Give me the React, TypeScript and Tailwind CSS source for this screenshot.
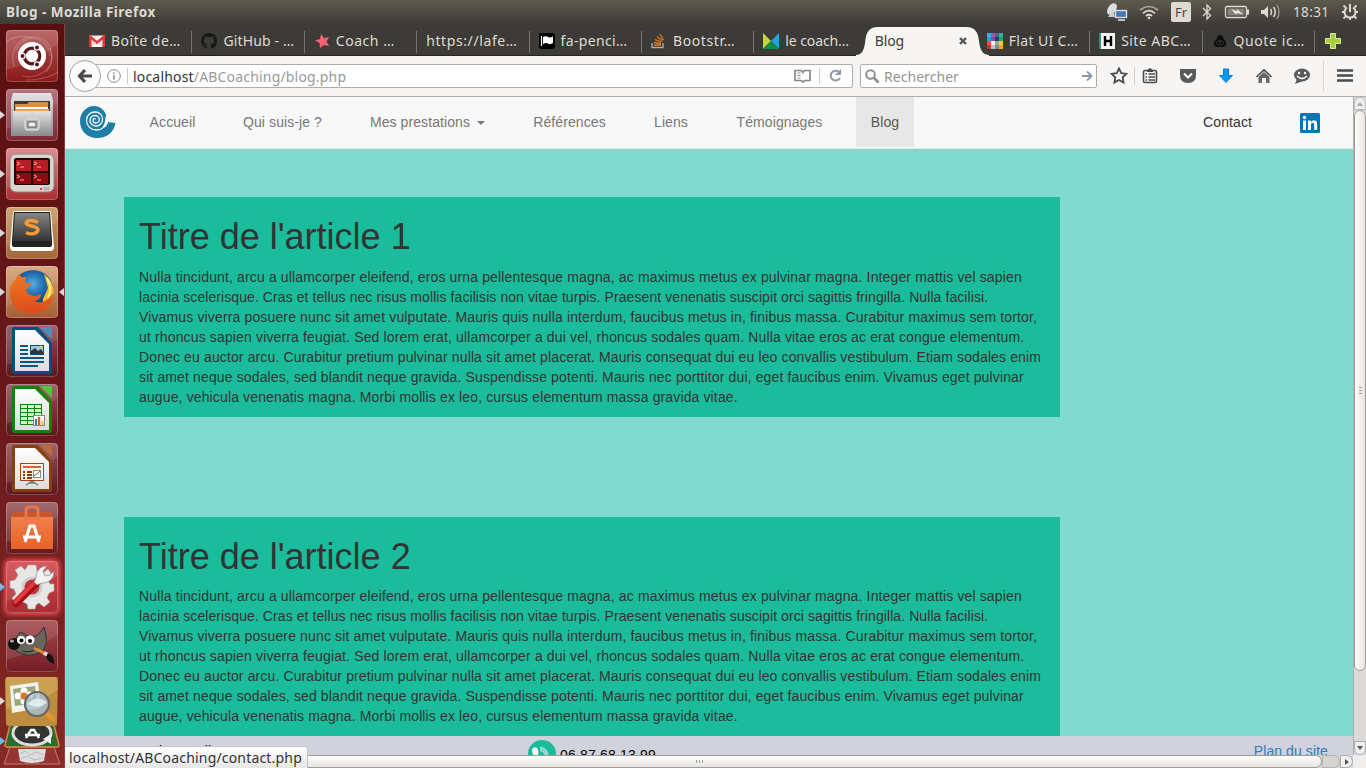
import React from "react";

const ubuntu = "font-['Noto_Sans','Open_Sans',sans-serif]";
const helv = "font-['Liberation_Sans',Arial,sans-serif]";

/* ---------- Launcher ---------- */

function Tile({ tone, left, right, children }: { tone: string; left?: string; right?: boolean; children: React.ReactNode }) {
  return (
    <div className="relative flex h-[52px] w-full shrink-0 justify-center pr-px">
      <svg viewBox="0 0 52 52" className={`h-[52px] w-[52px] rounded-[4px] ${tone}`}>
        <path d="M0 0H52V14Q26 34 0 40Z" fill="#fff" opacity=".1" />
        {children}
        <rect x=".5" y=".5" width="51" height="51" rx="4" fill="none" stroke="#fff" strokeOpacity=".22" />
      </svg>
      {left && (
        <svg viewBox="0 0 5 8" className="absolute top-[22px] left-0 h-2 w-[5px]"><path d="M0 0L5 4L0 8Z" fill={left} /></svg>
      )}
      {right && (
        <svg viewBox="0 0 5 8" className="absolute top-[22px] right-0 h-2 w-[5px]"><path d="M5 0L0 4L5 8Z" fill="#d8d8d8" /></svg>
      )}
    </div>
  );
}

function OfficePage({ color, fold }: { color: string; fold: string }) {
  return (
    <>
      <path d="M8 2H32L46 18V47Q46 49 44 49H8Q6 49 6 47V4Q6 2 8 2Z" fill={color} />
      <path d="M9 5H29L43 19V46H9Z" fill="url(#paper)" />
      <path d="M34 2H46V14Z" fill={fold} />
    </>
  );
}

function Launcher() {
  return (
    <aside className="relative flex h-full w-[65px] shrink-0 flex-col gap-[7px] overflow-hidden border-r border-[#8b4040] bg-linear-to-b from-[#58100f] via-[#6a171b] to-[#852a25] pt-[6px]">
      <svg className="absolute h-0 w-0">
        <defs>
          <linearGradient id="paper" x2="0" y2="1"><stop stopColor="#fff" /><stop offset="1" stopColor="#dcdcdc" /></linearGradient>
          <linearGradient id="metal" x2="0" y2="1"><stop stopColor="#e4e4e4" /><stop offset="1" stopColor="#8c8c8c" /></linearGradient>
          <linearGradient id="dark" x2="0" y2="1"><stop stopColor="#858585" /><stop offset="1" stopColor="#333" /></linearGradient>
          <linearGradient id="orange" x2="0" y2="1"><stop stopColor="#ee8150" /><stop offset="1" stopColor="#e96224" /></linearGradient>
          <radialGradient id="globe" cx=".5" cy=".35"><stop stopColor="#5ab0e0" /><stop offset=".5" stopColor="#2472b4" /><stop offset="1" stopColor="#173f7f" /></radialGradient>
          <linearGradient id="fox" x2="0" y2="1"><stop stopColor="#ee7a22" /><stop offset="1" stopColor="#dd4a1b" /></linearGradient>
        </defs>
      </svg>
      <Tile tone="bg-linear-to-b from-[#b05656] to-[#8b1518]">
        <g fill="none" stroke="#fff" strokeOpacity=".2" strokeWidth="1.2">
          <path d="M8 36C2 14 20 4 34 8C46 12 50 30 40 42" /><path d="M44 18C52 38 32 50 16 46" /><path d="M10 20C20 2 42 6 44 26" /><path d="M0 12Q10 4 26 8M52 42Q40 50 20 50" />
        </g>
        <circle cx="26" cy="26" r="14" fill="#fff" />
        <circle cx="26" cy="26" r="7.8" fill="none" stroke="#591519" strokeWidth="3.2" />
        <g stroke="#fff" strokeWidth="1.2" fill="#591519"><circle cx="16.500" cy="26" r="2.600" /><circle cx="31" cy="17.500" r="2.600" /><circle cx="31" cy="34.500" r="2.600" /></g>
      </Tile>
      <Tile tone="bg-linear-to-b from-[#ad6470] to-[#7d2936]" left="#d8d8d8">
        <path d="M7 4H45L47 11V47H5V11Z" fill="url(#metal)" /><rect x="8" y="12" width="36" height="12" fill="#3a3a3a" />
        <path d="M9 15H21L23 13H42V24H9Z" fill="#e58a36" /><path d="M10 18H42V21H10Z" fill="#fff" /><path d="M9 20H43V24H9Z" fill="#f3a24b" />
        <path d="M7 22H45V46H7Z" fill="url(#metal)" /><rect x="19" y="30" width="14" height="11" rx="2" fill="#b8b8b8" stroke="#e9e9e9" /><rect x="22" y="33" width="8" height="5" fill="#eee" stroke="#555" />
      </Tile>
      <Tile tone="bg-linear-to-b from-[#d98084] to-[#ac2c30]" left="#d8d8d8">
        <rect x="4" y="6" width="44" height="38" rx="6" fill="#d6d5cf" stroke="#888" /><rect x="8" y="10" width="36" height="27" rx="2" fill="#280204" />
        <path d="M10 12H25V23H10ZM27 12H42V23H27Z" fill="#b81d24" /><path d="M10 25H25V36H10ZM27 25H42V36H27Z" fill="#8d0b0e" />
        <path d="M11 14l3 1.5-3 1.5M14 19h4M28 14l3 1.5-3 1.5M31 19h4M11 27l3 1.5-3 1.5M14 32h4M28 27l3 1.5-3 1.5M31 32h4" stroke="#f5a5a5" fill="none" /><circle cx="35" cy="41" r="1" fill="red" /><rect x="38" y="39.5" width="5" height="2.5" fill="#bbb" stroke="#999" strokeWidth=".5" />
      </Tile>
      <Tile tone="bg-linear-to-b from-[#c99a67] to-[#a26639]" left="#d8d8d8">
        <path d="M7 6Q7 4 9 4H43Q45 4 45 6L48 40Q48 44 44 44H8Q4 44 4 40Z" fill="#fff" /><path d="M8 5H44L46 34V38Q46 40 44 40H8Q6 40 6 38V34Z" fill="#222" /><path d="M9 6H43L45 34H7Z" fill="url(#dark)" />
        <path d="M32 15.500C27 12.500 21 13 20 16C20 20 32 18 32 23C31 27 25 28 20 25.500" fill="none" stroke="#f79b37" strokeWidth="3.400" />
      </Tile>
      <Tile tone="bg-linear-to-b from-[#d5a277] to-[#a45e35]" left="#d8d8d8" right>
        <circle cx="27" cy="24" r="20" fill="url(#globe)" />
        <path d="M38 8C48 16 51 27 43 38L36 43L37 33L42 22Z" fill="#f3bd2c" /><path d="M41 12Q47 22 42 32" stroke="#ffee90" fill="none" strokeWidth="1.800" />
        <path d="M12 8C15 10 15 12 21 11Q18 14 20 17H26Q25 21 20 23C21 29 28 32 35 28C35 33 31 35 28 35C35 38 41 36 47 27C47 40 38 47.500 26 47.500C12 47 4 39 4 27C4 19 7 15 10 13Z" fill="url(#fox)" />
      </Tile>
      <Tile tone="bg-linear-to-b from-[#935159] to-[#5c171e]">
        <OfficePage color="#064f7f" fold="#4791bd" />
        <path d="M14 21H22M14 25H22M14 29H22M14 33H38M14 37H38M14 41H32" stroke="#0b5687" strokeWidth="2" /><rect x="24.5" y="20.5" width="13" height="9" fill="#99c9e5" stroke="#064f7f" /><path d="M25 29V26L29 23L32 26L35 24L37 27V29Z" fill="#333" /><circle cx="35" cy="22" r="1.5" fill="#f8c84b" />
      </Tile>
      <Tile tone="bg-linear-to-b from-[#935159] to-[#5c171e]">
        <OfficePage color="#16820c" fold="#55c439" />
        <rect x="14" y="20" width="22" height="21" fill="#138207" /><path d="M15 22.500H35M15 26.500H35M15 30.500H35M15 34.500H35M15 38.500H35" stroke="#d7f7c8" strokeWidth="2.800" strokeDasharray="6 1" />
        <rect x="27.5" y="31.5" width="11" height="10" fill="#fff" stroke="#888" /><path d="M30 41V35" stroke="#2585c7" strokeWidth="2" /><path d="M33 41V33" stroke="#e75b20" strokeWidth="2.5" /><path d="M36.5 41V37" stroke="#f5ba25" strokeWidth="2" />
      </Tile>
      <Tile tone="bg-linear-to-b from-[#935159] to-[#5c171e]">
        <OfficePage color="#87400f" fold="#b86b38" />
        <rect x="14.5" y="20.5" width="23" height="17" fill="#fff4ea" stroke="#a54512" /><path d="M17 24H35" stroke="#d5642a" strokeWidth="2" /><path d="M17 29H19M17 32H19M17 35H19M21 29H26M21 32H26M21 35H26" stroke="#913b0c" strokeWidth="2" /><rect x="27.5" y="27.5" width="7" height="7" fill="#fff" stroke="#888" /><path d="M28 33l3-2 3-3" stroke="#3a9b32" fill="none" /><path d="M26 38L20 42M26 38L32 42M24 40H28" stroke="#777" strokeWidth="1.5" />
      </Tile>
      <Tile tone="bg-linear-to-b from-[#97585d] to-[#64181e]">
        <path d="M5 14H47V47H5Z" fill="url(#orange)" /><path d="M7 10H45L47 15H5Z" fill="#c9562a" /><path d="M20 18V8Q20 5 23 5H29Q32 5 32 8V18" fill="none" stroke="#e87645" strokeWidth="3" />
        <path d="M19 40L24 24H28L33 40M17 35H35" fill="none" stroke="#fff" strokeWidth="3.200" />
      </Tile>
      <Tile tone="bg-linear-to-b from-[#d4484c] to-[#a82d32] shadow-[0_0_4px_2px_#ed4b50]" left="#6cbdf0">
        <path d="M22 4H30L31 10L37 12L42 8L46 14L42 19L44 23H48V30L43 32L41 37L44 41L38 46L33 42L30 44L29 48H22L21 43L15 40L10 43L6 37L10 33L8 28L4 27V20L9 19L12 14L9 9L15 5L19 9Z" fill="#e7e7e5" stroke="#aaa" strokeWidth=".6" /><circle cx="26" cy="26" r="9" fill="#bd3940" stroke="#cfcfcf" strokeWidth="3" />
        <path d="M31 21L10 42" stroke="#a80f17" strokeWidth="8" strokeLinecap="round" /><path d="M30 20L9 41" stroke="#e33a40" strokeWidth="4" strokeLinecap="round" />
        <path d="M30 17C30 10 34 5 41 5L37 10L39 15L44 14L48 10C48 18 43 22 36 22L31 24L28 21Z" fill="#f3f3f3" stroke="#888" strokeWidth=".7" />
      </Tile>
      <Tile tone="bg-linear-to-b from-[#a34b50] to-[#751c24]">
        <path d="M14 12L22 16Q31 20 38 7Q44 26 35 32Q23 39 10 31L8 22Z" fill="#67655d" stroke="#33322f" /><ellipse cx="8" cy="24" rx="6" ry="6" fill="#121212" /><ellipse cx="6" cy="21" rx="2" ry="1.5" fill="#aaa" /><circle cx="15" cy="20" r="4" fill="#fff" /><circle cx="24" cy="20" r="4.5" fill="#fff" /><circle cx="15.5" cy="20.5" r="2" /><circle cx="24" cy="21" r="2" />
        <path d="M16 31Q26 34 31 27" stroke="#222" fill="none" /><path d="M28 28L42 35" stroke="#e48a34" strokeWidth="3" /><path d="M38 33L42 35" stroke="#ddd" strokeWidth="4" /><path d="M42 33Q49 36 48 44Q42 42 40 37Z" fill="#111" />
      </Tile>
      <div className="-mt-0.5 flex h-[91px] shrink-0">
        <svg viewBox="0 0 64 91" className="h-[91px] w-16">
          <path d="M10 70H54L60 87H4Z" fill="#963433" stroke="#cf7974" /><path d="M18 72H46L44 84Q32 88 20 84Z" fill="#ddd" /><path d="M20 77L25 74L30 78L36 75L44 78M21 82L27 79L34 83L43 81" stroke="#bbb" fill="none" />
          <path d="M10 48H54L59 68Q59 70 57 70H7Q5 70 5 68Z" fill="#286c2f" stroke="#e08748" strokeWidth="1.5" /><ellipse cx="32" cy="56" rx="19" ry="12" fill="#333" stroke="#ddd" strokeWidth="3" /><path d="M26 61L31 53H34L39 61M25 58H40" stroke="#fff" strokeWidth="2.4" fill="none" /><path d="M43 62L51 57V67Z" fill="#eee" />
          <path d="M8 0H56Q58 0 58 3L57 46Q57 49 54 49H9Q6 49 6 46L5 4Q5 0 8 0Z" fill="#bb8d3c" /><path d="M8 0H56L58 12Q35 30 6 32V0Z" fill="#dfbd78" opacity=".4" />
          <path d="M10 9L38 5L41 31L12 36Z" fill="#f2f2ef" /><path d="M13 12L35 9L37 26L15 29Z" fill="#96a976" /><g fill="#fff"><circle cx="24" cy="14" r="3.500" /><circle cx="18" cy="19" r="3.500" /><circle cx="30" cy="18" r="3.500" /><circle cx="24" cy="24" r="3.500" /></g><circle cx="24" cy="19" r="3.500" fill="#e17427" />
          <path d="M46 36L53 42" stroke="#e49331" strokeWidth="5" strokeLinecap="round" /><circle cx="37" cy="27" r="12" fill="#aac2d0" fillOpacity=".8" stroke="#666" strokeWidth="2.200" /><path d="M27 27Q36 17 47 25Q42 31 33 29Z" fill="#e9f4fa" opacity=".8" />
          <path d="M0 20L5 24L0 28Z" fill="#d8d8d8" /><path d="M0 60L5 64L0 68Z" fill="#6cbdf0" />
        </svg>
      </div>
    </aside>
  );
}

/* ---------- System bar ---------- */

function SystemBar() {
  return (
    <header className={`flex h-6 shrink-0 items-center justify-between bg-linear-to-b from-[#5d5a4f] to-[#3d3c37] pl-1.5 text-[#dfdbd2] ${ubuntu}`}>
      <span className="text-[13.5px] font-bold tracking-[0.48px]">Blog - Mozilla Firefox</span>
      <svg viewBox="0 0 260 24" className="h-6 w-[260px]">
        <ellipse cx="6" cy="9" rx="4" ry="6.500" transform="rotate(35 6 9)" fill="#ddd" /><path d="M2 17L7 9L9 17Z" fill="#ccc" /><rect x="9.500" y="10.500" width="11" height="7" fill="#3f77b8" stroke="#ddd" strokeWidth="1.400" /><path d="M12 20H19" stroke="#ddd" strokeWidth="1.600" />
        <g fill="none" stroke="#dfdbd2" strokeWidth="1.700"><path d="M34 10Q43 3 52 10" opacity=".65" /><path d="M37 13.300Q43 8 49 13.300" /><path d="M40 16Q43 13.500 46 16" /></g><circle cx="43" cy="18" r="1.300" fill="#dfdbd2" />
        <rect x="65" y="2" width="20" height="20" rx="2" fill="#dfdbd2" /><text x="69" y="17" fontSize="13" fill="#4a4843">Fr</text>
        <path d="M97 8L104.500 15.500L101 19V5L104.500 8.500L97 16" fill="none" stroke="#dfdbd2" strokeWidth="1.300" />
        <rect x="119.500" y="6.500" width="21" height="11" rx="1.500" fill="none" stroke="#dfdbd2" strokeWidth="1.300" /><rect x="121.500" y="8.500" width="17" height="7" fill="#85827a" /><path d="M142 9.500V14.500" stroke="#dfdbd2" strokeWidth="2" /><path d="M125 9L131 11.500V9L137 14.500L130.500 12.800V15Z" fill="#eee" />
        <path d="M155 10H158L162 6V18L158 14H155Z" fill="#dfdbd2" /><g fill="none" stroke="#dfdbd2" strokeWidth="1.500"><path d="M164.500 9Q166.500 12 164.500 15" /><path d="M167.500 7Q171 12 167.500 17" /><path d="M171 5Q175 12 171 19" opacity=".5" /></g>
        <text x="187" y="17" fontSize="13.500" textLength="36" fill="#dfdbd2">18:31</text>
        <g fill="none" stroke="#dfdbd2"><path d="M241 7.500A5.500 5.500 0 1 0 247 7.500" strokeWidth="2" /><path d="M244 4V12" strokeWidth="2" /><path d="M239.500 7.500L237.500 5.500M248.500 7.500L250.500 5.500M236 12H239M249 12H252M239.500 16.500L237.500 18.500M248.500 16.500L250.500 18.500M244 17V20" strokeWidth="1.800" /></g>
      </svg>
    </header>
  );
}

/* ---------- Tabs ---------- */

const box = "h-4 w-4 shrink-0";
const icons = {
  gmail: <svg viewBox="0 0 16 16" className={box}><rect y="2.500" width="16" height="11.500" rx="1" fill="#f4f4f4" /><path d="M1.300 14V4L8 9.500L14.700 4V14" fill="none" stroke="#dd3a35" strokeWidth="2.600" /><path d="M3 13L7 9M13 13L9 9" stroke="#e8a09d" strokeWidth=".7" /></svg>,
  github: <svg viewBox="0 0 16 16" className={box}><path fill="#171717" d="M8 0C3.580 0 0 3.580 0 8c0 3.540 2.290 6.530 5.470 7.590.4.070.55-.17.55-.38 0-.19-.01-.82-.01-1.490-2.010.37-2.530-.49-2.690-.94-.09-.23-.48-.94-.82-1.130-.28-.15-.68-.52-.01-.53.63-.01 1.080.58 1.230.82.72 1.210 1.870.87 2.330.66.07-.52.28-.87.51-1.070-1.780-.2-3.640-.89-3.640-3.950 0-.87.31-1.590.82-2.150-.08-.2-.36-1.020.08-2.120 0 0 .67-.21 2.200.82a7.400 7.400 0 0 1 4 0c1.530-1.040 2.200-.82 2.200-.82.44 1.100.16 1.920.08 2.120.51.56.82 1.270.82 2.150 0 3.070-1.870 3.750-3.650 3.950.29.25.54.73.54 1.480 0 1.070-.01 1.930-.01 2.200 0 .21.15.46.55.38A8 8 0 0 0 16 8c0-4.420-3.580-8-8-8z" /></svg>,
  star: <svg viewBox="0 0 16 16" className={box}><path fill="#ee6472" d="M7 1L10 5L15 4L12.500 8.500L15 13L10 12L6 15L5.500 10L1 7.500L6 6Z" /></svg>,
  flag: <svg viewBox="0 0 16 16" className={box}><rect width="16" height="16" rx="2" fill="#000" /><path d="M2.500 3V13" stroke="#fff" strokeWidth="1.200" /><path d="M4 4Q7 2.500 9 4Q11 5 14 3.500V10Q11 12 9 10.500Q7 9.500 4 11Z" fill="#fff" /></svg>,
  stack: <svg viewBox="0 0 16 16" className={box}><path d="M1 10V14.500H12V10" fill="none" stroke="#a8b0b5" strokeWidth="1.300" /><path d="M3 12H10M3 9.500L10 10.500M4 6.700L10.500 9M6 3.500L11.300 7.800M9 1L12.500 7" stroke="#e8781e" strokeWidth="1.300" /></svg>,
  coach: <svg viewBox="0 0 16 16" className={box}><path d="M0 0L8 8L0 16Z" fill="#c5d245" /><path d="M16 0L8 8L16 16Z" fill="#20a0df" /><path d="M8 8L16 16H0Z" fill="#128d43" /></svg>,
  flat: <svg viewBox="0 0 16 16" className={box}>{["#3fa9e0","#9b59b6","#5c6470","#1abc9c","#3498db","#8e44ad","#2c3e50","#16a085","#f04f3e","#ecf0f1","#95a5a6","#f9cf2f","#c0392b","#bdc3c7","#7f8c8d","#f9a514"].map((c, i) => <rect key={i} x={(i % 4) * 4} y={Math.floor(i / 4) * 4} width="4" height="4" fill={c} />)}</svg>,
  hero: <svg viewBox="0 0 16 16" className={box}><rect width="16" height="16" fill="#f4f4f4" /><rect width="2" height="16" fill="#3d8b70" /><path d="M6 3V13M12 3V13M6 8H12" stroke="#000" strokeWidth="2.400" /></svg>,
  quote: <svg viewBox="0 0 16 16" className={box}><path d="M8 2Q11 2 11 5Q15 9 14 12Q12 15 8 13.500Q3 15 2 12Q1 9 5 6Q5 2 8 2Z" fill="#0c0c0c" /><path d="M4 9.500Q8 5.500 12 9.500Q11 12 8 12Q5 12 4 9.500Z" fill="none" stroke="#3a3936" /><circle cx="8" cy="9.300" r="1" fill="#3a3936" /></svg>,
};

function Tab({ icon, text, bar = true, track }: { icon?: React.ReactNode; text: string; bar?: boolean; track: string }) {
  return (
    <div className="relative flex h-8 w-[112.4px] shrink-0 items-center gap-1.5 pt-px pl-[9px]">
      {icon}
      <span className={`whitespace-nowrap ${track}`}>{text}</span>
      {bar && <i className="absolute top-[7px] right-0 h-[22px] w-px bg-[#777570]" />}
    </div>
  );
}

function Tabs() {
  return (
    <div className={`relative flex h-8 shrink-0 border-b border-[#252421] bg-[#3c3b37] pl-[15px] text-[14px] text-[#dfdbd2] ${ubuntu}`}>
      <Tab icon={icons.gmail} text="Boîte de…" track="tracking-[0.5px]" />
      <Tab icon={icons.github} text="GitHub - …" track="tracking-[0.15px]" />
      <Tab icon={icons.star} text="Coach …" track="tracking-[0.55px]" />
      <Tab text="https://lafe…" track="tracking-[0.6px]" />
      <Tab icon={icons.flag} text="fa-penci…" track="tracking-[0.35px]" />
      <Tab icon={icons.stack} text="Bootstr…" track="tracking-[0.6px]" />
      <Tab icon={icons.coach} text="le coach…" track="tracking-[-0.1px]" bar={false} />
      <div className="relative z-10 flex h-8 w-[111px] shrink-0 items-center justify-between pt-px pr-[11px] pl-[8px] text-[#3c3b37]">
        <svg viewBox="0 0 136 29" className="absolute top-[3px] -left-[14px] -z-10 h-[29px] w-[136px]"><path d="M3 29V28C9 28 11 23 12 16C13 5 16 0 25 0H113C122 0 125 5 126 14C127 23 130 28 136 28V29Z" fill="#f6f5f4" /></svg>
        <span className="tracking-[-0.1px]">Blog</span>
        <svg viewBox="0 0 8 8" className="h-2 w-2"><path d="M1 1L7 7M7 1L1 7" stroke="#555" strokeWidth="2.400" /></svg>
      </div>
      <Tab icon={icons.flat} text="Flat UI C…" track="tracking-[0.35px]" />
      <Tab icon={icons.hero} text="Site ABC…" track="tracking-[0.45px]" />
      <Tab icon={icons.quote} text="Quote ic…" track="tracking-[0.6px]" />
      <div className="flex flex-1 items-center pt-[3px] pl-[9px]">
        <svg viewBox="0 0 18 18" className="h-[18px] w-[18px]"><path d="M6.500 1.500H11.500V6.500H16.500V11.500H11.500V16.500H6.500V11.500H1.500V6.500H6.500Z" fill="#a6cf3d" stroke="#d6ef8b" /></svg>
      </div>
    </div>
  );
}

/* ---------- Navigation toolbar ---------- */

function Toolbar() {
  return (
    <div className={`flex h-[41px] shrink-0 items-center border-b border-[#b0ada8] bg-[#f6f5f4] pl-1 text-[14px] ${ubuntu}`}>
      <div className="z-10 flex h-8 w-8 shrink-0 items-center justify-center rounded-full border border-[#a5a29d] bg-[#fafafa]">
        <svg viewBox="0 0 16 16" className="h-4 w-4"><path d="M8 2L2.500 8L8 14M3 8H15" fill="none" stroke="#4a4a4a" strokeWidth="3.200" /></svg>
      </div>
      <div className="-ml-[5px] flex h-6 w-[757px] shrink-0 items-center rounded-r-[2px] border border-[#b0ada8] bg-white pl-2.5">
        <svg viewBox="0 0 14 14" className="h-[14px] w-[14px]"><circle cx="7" cy="7" r="6.300" fill="none" stroke="#8a8a8a" /><path d="M7 6V10.500M7 3.500V5" stroke="#8a8a8a" strokeWidth="1.500" /></svg>
        <i className="mr-[5px] ml-1.5 h-4 w-px bg-[#ccc]" />
        <span className="tracking-[0.18px] text-[#9a9a9a]"><span className="text-[#333]">localhost</span>/ABCoaching/blog.php</span>
        <svg viewBox="0 0 58 22" className="ml-auto h-[22px] w-[58px]">
          <path d="M1 5.500H7L9 7L11 5.500H16V15.500H11L9 17L7 15.500H1Z" fill="none" stroke="#888" strokeWidth="1.700" /><path d="M3.500 8H6.500M3.500 10.500H6.500M3.500 13H6.500M9 7V9" stroke="#888" /><path d="M25.500 3V19" stroke="#ccc" />
          <path d="M45 7A5 4.800 0 1 0 46 13" fill="none" stroke="#8b9aa8" strokeWidth="2" /><path d="M47 4V10H41Z" fill="#8b9aa8" />
        </svg>
      </div>
      <div className="ml-[7px] flex h-6 w-[237px] shrink-0 items-center rounded-[2px] border border-[#b0ada8] bg-white pr-[3px] pl-1">
        <svg viewBox="0 0 15 15" className="h-[15px] w-[15px]"><circle cx="5.500" cy="5.500" r="4.300" fill="none" stroke="#919191" strokeWidth="2" /><path d="M9 9L13.500 13.500" stroke="#919191" strokeWidth="2.600" /></svg>
        <span className="ml-1 tracking-[0.05px] text-[#949494]">Rechercher</span>
        <svg viewBox="0 0 12 12" className="ml-auto h-3 w-3"><path d="M1 6H10M6 1.500L10.500 6L6 10.500" fill="none" stroke="#8b9aa8" strokeWidth="1.800" /></svg>
      </div>
      <svg viewBox="0 0 269 40" className="h-10 w-[269px]" fill="none" stroke="#4b4b4b">
        <path d="M22 12.500L24.300 17.200L29.300 17.800L25.700 21.300L26.600 26.500L22 24L17.400 26.500L18.300 21.300L14.700 17.800L19.700 17.200Z" strokeWidth="1.800" />
        <path d="M37.500 11V29" stroke="#d3d1ce" />
        <path d="M50 14.500H48Q46.500 14.500 46.500 16V25Q46.500 26.500 48 26.500H58Q59.500 26.500 59.500 25V16Q59.500 14.500 58 14.500H56" strokeWidth="1.600" /><path d="M50 16V14L53 12L56 14V16Z" fill="#4b4b4b" stroke="none" /><path d="M48.500 18H50M51.500 18H58M48.500 21H50M51.500 21H58M48.500 24H50M51.500 24H58" strokeWidth="1.500" />
        <path d="M83 13H99V19Q99 27 91 27Q83 27 83 19Z" fill="#5a5a5a" stroke="none" /><path d="M87 17.500L91 21.500L95 17.500" stroke="#fff" strokeWidth="2" />
        <path d="M126.500 13H131.500V19.500H135.500L129 26.500L122.500 19.500H126.500Z" fill="#0996f8" stroke="#0b7ddb" />
        <path d="M159.500 21L167 13.800L174.500 21" strokeWidth="1.600" /><path d="M161.500 21L167 16L172.500 21V27H169V22H165V27H161.500Z" fill="#666" stroke="none" />
        <ellipse cx="205" cy="19" rx="8" ry="6.500" fill="#5a5a5a" stroke="none" /><path d="M200 23L198 28L206 25Z" fill="#5a5a5a" stroke="none" /><circle cx="202" cy="17" r="1.200" fill="#fff" stroke="none" /><circle cx="208" cy="17" r="1.200" fill="#fff" stroke="none" /><path d="M200 20Q205 25 210 20" stroke="#fff" strokeWidth="1.300" />
        <path d="M226.500 4V36" stroke="#dad8d5" /><path d="M240 14.500H256M240 19.500H256M240 24.500H256" strokeWidth="2.600" />
      </svg>
    </div>
  );
}

/* ---------- Site ---------- */

function SiteNav() {
  const link = "flex h-[50px] shrink-0 items-center justify-center whitespace-nowrap";
  return (
    <nav className="flex h-[52px] shrink-0 border-b border-[#e7e7e7] bg-[#f8f8f8] text-[14px] tracking-[0.09px] text-[#777]">
      <svg viewBox="0 0 36 34" className="mt-2 ml-[15px] h-[34px] w-9 shrink-0">
        <path d="M27 15C27 7 21 1 14 1C6 1 0 8 0 16C0 26 7 33 17 33C27 33 34 27 35.500 18L28 17C27.500 20 25 22 23 23Z" fill="#1f7ea6" />
        <path d="M27.500 14C27.500 21 22 25 16.500 25C10.500 25 6.500 20.500 6.500 15.500C6.500 10 10.500 7 15 7C20 7 22.500 10.500 22.500 14.500C22.500 18.500 19.500 21 16 21C12.500 21 10 18.500 10 15.500C10 12.500 12.500 10.500 15 10.500C17.500 10.500 19.300 12.500 19.300 14.500C19.300 16.700 17.500 18 16 18C14 18 13 16.500 13 15.500C13 14 14.500 13.300 15.800 14" fill="none" stroke="#f8f8f8" strokeWidth="1.300" />
        <path d="M26.500 10Q29.500 15 26.500 20L22 23Q25.500 18 25.500 12Z" fill="#f8f8f8" />
      </svg>
      <div className="ml-[19px] flex gap-[18px]">
        <a className={`${link} w-[75px]`}>Accueil</a>
        <a className={`${link} w-[109px]`}>Qui suis-je ?</a>
        <a className={`${link} w-[145px] gap-[7px]`}><span>Mes prestations</span><svg viewBox="0 0 8 4" className="mt-0.5 h-1 w-2"><path d="M0 0H8L4 4Z" fill="#777" /></svg></a>
        <a className={`${link} w-[103px]`}>Références</a>
        <a className={`${link} w-[64px]`}>Liens</a>
        <a className={`${link} w-[117px]`}>Témoignages</a>
        <a className={`${link} w-[58px] bg-[#e7e7e7] text-[#555]`}>Blog</a>
      </div>
      <a className={`${link} mr-[48px] ml-auto text-[#333]`}>Contact</a>
      <svg viewBox="0 0 20 20" className="mt-4 mr-[33px] h-5 w-5 shrink-0"><rect width="20" height="20" rx="1.500" fill="#0077b5" /><path d="M3 7.500H6V17H3ZM8 7.500H10.800V9Q12 7.200 14 7.200Q17.200 7.200 17.200 11.500V17H14.200V12Q14.200 9.800 12.700 9.800Q11 9.800 11 12V17H8Z" fill="#fff" /><circle cx="4.500" cy="4.500" r="1.700" fill="#fff" /></svg>
    </nav>
  );
}

const lines = [
  ["Nulla tincidunt, arcu a ullamcorper eleifend, eros urna pellentesque magna, ac maximus metus ex pulvinar magna. Integer mattis vel sapien", "tracking-[0.139px]"],
  ["lacinia scelerisque. Cras et tellus nec risus mollis facilisis non vitae turpis. Praesent venenatis suscipit orci sagittis fringilla. Nulla facilisi.", "tracking-[0.08px]"],
  ["Vivamus viverra posuere nunc sit amet vulputate. Mauris quis nulla interdum, faucibus metus in, finibus massa. Curabitur maximus sem tortor,", "tracking-[0.142px]"],
  ["ut rhoncus sapien viverra feugiat. Sed lorem erat, ullamcorper a dui vel, rhoncus sodales quam. Nulla vitae eros ac erat congue elementum.", "tracking-[0.145px]"],
  ["Donec eu auctor arcu. Curabitur pretium pulvinar nulla sit amet placerat. Mauris consequat dui eu leo convallis vestibulum. Etiam sodales enim", "tracking-[0.127px]"],
  ["sit amet neque sodales, sed blandit neque gravida. Suspendisse potenti. Mauris nec porttitor dui, eget faucibus enim. Vivamus eget pulvinar", "tracking-[0.13px]"],
  ["augue, vehicula venenatis magna. Morbi mollis ex leo, cursus elementum massa gravida vitae.", "tracking-[0.132px]"],
];

function Article({ n }: { n: number }) {
  return (
    <article className="w-[936px] shrink-0 bg-[#1abc9c] px-[15px] pt-5 pb-2.5 text-[14px] leading-5 text-[#333]">
      <h1 className="mb-2.5 text-[36px] leading-[39.6px]">Titre de l'article {n}</h1>
      {lines.map(([t, k]) => <p key={t} className={`whitespace-nowrap ${k}`}>{t}</p>)}
    </article>
  );
}

function Site() {
  return (
    <main className={`flex min-h-0 min-w-0 flex-1 flex-col bg-[#82d9cf] ${helv}`}>
      <SiteNav />
      <div className="flex min-h-0 flex-1 flex-col gap-[100px] overflow-hidden pt-12 pl-[59px]">
        <Article n={1} />
        <Article n={2} />
      </div>
      <footer className="flex h-[19px] shrink-0 items-start overflow-hidden bg-[#d0d3dc] text-[14px] leading-5 whitespace-nowrap text-black">
        <span className="mt-[5px] ml-[28px] w-[435px]">11 Rue Robert Dolby</span>
        <svg viewBox="0 0 28 28" className="mt-1 h-7 w-7 shrink-0"><circle cx="14" cy="14" r="14" fill="#1abc9c" /><path d="M4 9Q6 6 9 8Q11 11 10 14Q12 19 16 20Q20 18 22 22Q18 26 12 22Q4 17 4 9Z" fill="#fff" /><path d="M12 10Q17 11 18 17M12 7.500Q19 8.500 20 17" stroke="#9fdfd1" strokeWidth="1.800" fill="none" /></svg>
        <span className="mt-[9px] ml-1 tracking-[0.18px]">06 87 68 13 99</span>
        <span className="mt-[5px] mr-[25px] ml-auto tracking-[0.09px] text-[#337ab7]">Plan du site</span>
      </footer>
    </main>
  );
}

function VScroll() {
  return (
    <div className="flex w-[13px] shrink-0 flex-col border-l border-[#b2afaa] bg-[#dcdad8]">
      <div className="flex h-[13px] items-center justify-center rounded-t-full border border-[#bbb] bg-[#eee]"><svg viewBox="0 0 6 4" className="h-1 w-1.5"><path d="M0 4L3 0L6 4Z" fill="#aaa" /></svg></div>
      <div className="flex h-[561px] flex-col items-center justify-center gap-[2px] rounded-full border border-[#9d9a96] bg-linear-to-r from-white to-[#e6e4e2]"><i className="h-px w-[3px] bg-[#999]" /><i className="h-px w-[3px] bg-[#999]" /><i className="h-px w-[3px] bg-[#999]" /></div>
      <div className="mt-auto flex h-[14px] items-center justify-center rounded-b-full border border-[#aaa] bg-[#f2f1f0]"><svg viewBox="0 0 6 4" className="h-1 w-1.5"><path d="M0 0L3 4L6 0Z" fill="#555" /></svg></div>
    </div>
  );
}

function HScroll() {
  return (
    <div className="flex h-[13px] shrink-0 bg-[#efeeed]">
      <div className="flex w-[1288px] bg-[#d6d4d2]">
        <div className="flex w-[1257px] items-center justify-center gap-[2px] rounded-r-full border border-[#9d9a96] bg-linear-to-b from-white to-[#e6e4e2] pl-3"><i className="h-[3px] w-px bg-[#999]" /><i className="h-[3px] w-px bg-[#999]" /><i className="h-[3px] w-px bg-[#999]" /></div>
        <div className="w-[18px] rounded-r-full border border-[#b5b2ae]" />
        <div className="flex flex-1 items-center justify-center rounded-r-full border border-[#aaa] bg-[#f2f1f0]"><svg viewBox="0 0 4 6" className="h-1.5 w-1"><path d="M0 0L4 3L0 6Z" fill="#555" /></svg></div>
      </div>
    </div>
  );
}

export default function App() {
  return (
    <div className="flex h-[768px] w-[1366px] flex-col overflow-hidden">
      <SystemBar />
      <div className="flex min-h-0 flex-1">
        <Launcher />
        <div className="relative flex min-w-0 flex-1 flex-col">
          <Tabs />
          <Toolbar />
          <div className="flex min-h-0 flex-1"><Site /><VScroll /></div>
          <HScroll />
          <div className={`absolute bottom-0 left-0 flex h-[22px] w-[243px] items-center rounded-tr-[3px] border-t border-r border-[#c4c4c4] bg-linear-to-b from-white to-[#e6e6e6] pl-1 text-[14px] tracking-[0.18px] whitespace-nowrap text-[#333] ${ubuntu}`}>localhost/ABCoaching/contact.php</div>
        </div>
      </div>
    </div>
  );
}
